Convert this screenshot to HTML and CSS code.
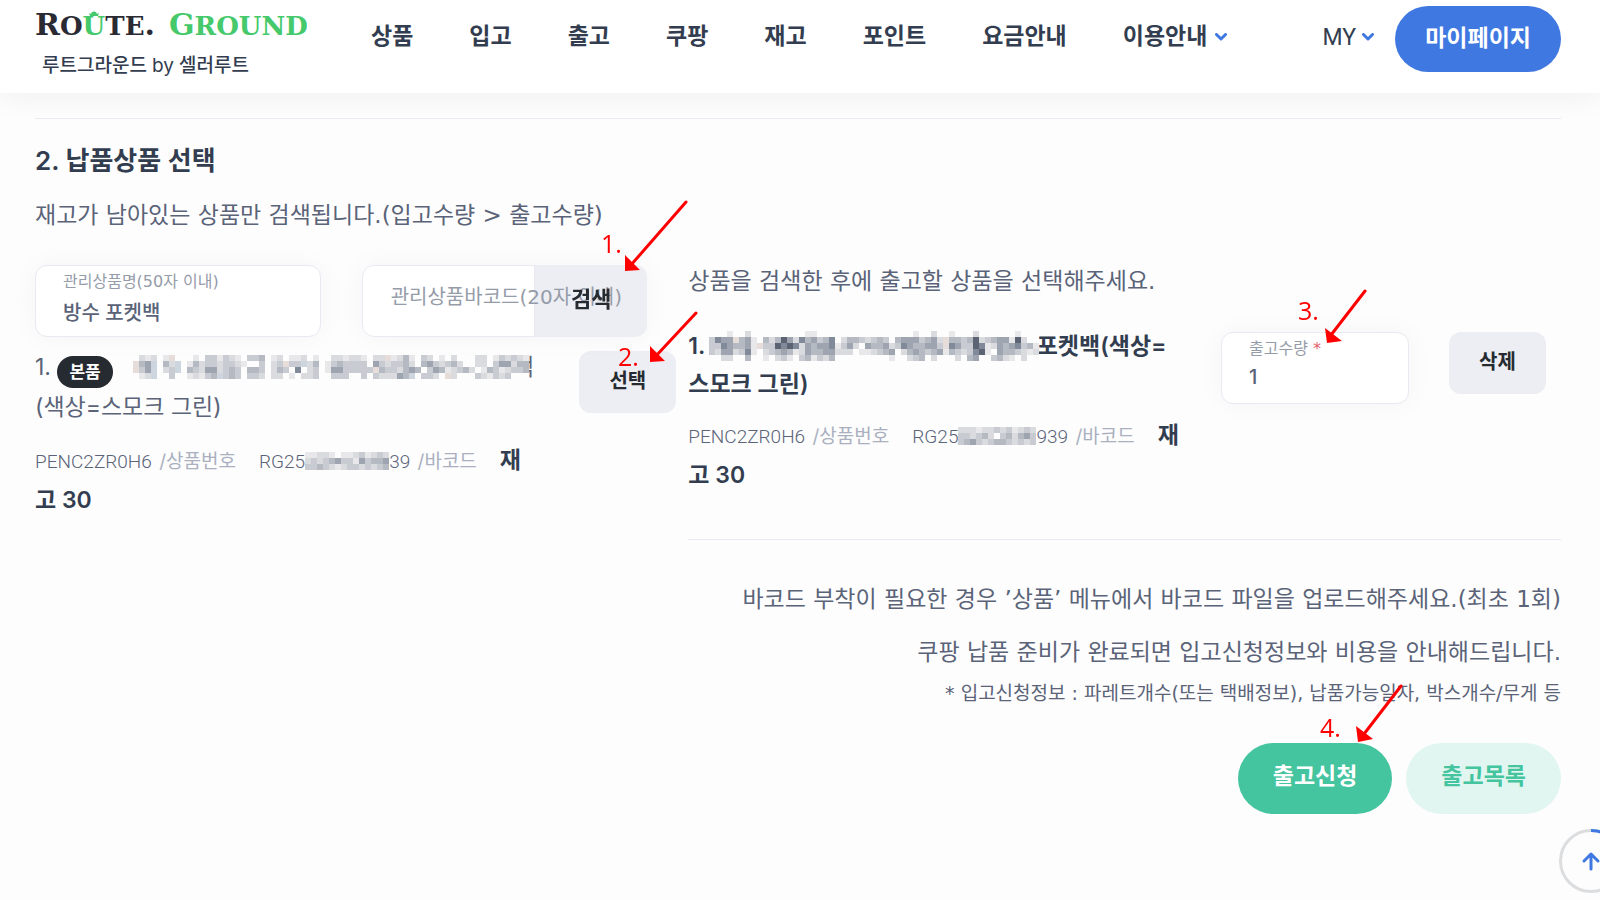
FILE: index.html
```html
<!DOCTYPE html>
<html lang="ko">
<head>
<meta charset="utf-8">
<meta name="viewport" content="width=device-width, initial-scale=1">
<title>루트그라운드</title>
<link rel="stylesheet" href="styles.css">
</head>
<body>
<header class="header">
  <a class="brand" href="#">
    <span class="logo"><span class="logo-dark"><span class="cap">R</span>O<span class="logo-u">U<svg class="crown" width="10" height="6" viewBox="0 0 10 6"><path d="M1 5 0 2l2 1 1-2h1l1-1 1 1h1l1 2 2-1-1 3z"/></svg></span>TE<span class="cap">.</span></span><span class="logo-green"><span class="cap">G</span>ROUND</span></span>
    <span class="tagline">루트그라운드 <span class="by">by</span> 셀러루트</span>
  </a>
  <nav class="nav">
    <a href="#">상품</a>
    <a href="#">입고</a>
    <a href="#">출고</a>
    <a href="#">쿠팡</a>
    <a href="#">재고</a>
    <a href="#">포인트</a>
    <a href="#">요금안내</a>
    <a href="#">이용안내<svg class="chev" width="12" height="8" viewBox="0 0 12 8"><path d="m1.500 1.500 4.500 4.500 4.500-4.500"/></svg></a>
  </nav>
  <div class="account">
    <a class="my" href="#">MY<svg class="chev" width="12" height="8" viewBox="0 0 12 8"><path d="m1.500 1.500 4.500 4.500 4.500-4.500"/></svg></a>
    <a class="mypage" href="#">마이페이지</a>
  </div>
</header>

<main class="page">
  <hr class="rule">
  <h2 class="title">2. 납품상품 선택</h2>
  <p class="lead">재고가 남아있는 상품만 검색됩니다.(입고수량 &gt; 출고수량)</p>

  <div class="columns">
    <section class="search">
      <form class="filters">
        <div class="field">
          <label for="name">관리상품명(50자 이내)</label>
          <input id="name" type="text" value="방수 포켓백">
        </div>
        <div class="group">
          <input id="barcode" type="text">
          <label for="barcode">관리상품바코드(20자 이내)</label>
          <button type="button"><span>검색</span></button>
        </div>
      </form>
      <div class="result">
        <div class="result-text">
          <p class="product">1. <span class="badge">본품</span><svg class="mosaic mosaic-soft" data-mosaic="found"></svg>백<br>(색상=스모크 그린)</p>
          <p class="meta"><span class="code">PENC2ZR0H6</span> <span class="kind">/상품번호</span><span class="code second">RG25<svg class="mosaic mosaic-code" data-mosaic="codeA"></svg>39</span> <span class="kind">/바코드</span><b class="stock">재<br>고 30</b></p>
        </div>
        <button class="btn" type="button">선택</button>
      </div>
    </section>

    <section class="chosen">
      <p class="hint">상품을 검색한 후에 출고할 상품을 선택해주세요.</p>
      <div class="item">
        <div class="item-text">
          <p class="product strong">1. <svg class="mosaic mosaic-hard" data-mosaic="picked"></svg>포켓백(색상=<br>스모크 그린)</p>
          <p class="meta"><span class="code">PENC2ZR0H6</span> <span class="kind">/상품번호</span><span class="code second">RG25<svg class="mosaic mosaic-code" data-mosaic="codeB"></svg>939</span> <span class="kind">/바코드</span><b class="stock">재<br>고 30</b></p>
        </div>
        <div class="field amount">
          <label for="qty">출고수량 <span class="req">*</span></label>
          <input id="qty" type="text" value="1">
        </div>
        <button class="btn" type="button">삭제</button>
      </div>
      <hr class="rule rule-item">
      <div class="notes">
        <p>바코드 부착이 필요한 경우 ’상품’ 메뉴에서 바코드 파일을 업로드해주세요.(최초 1회)</p>
        <p>쿠팡 납품 준비가 완료되면 입고신청정보와 비용을 안내해드립니다.</p>
        <p class="small">* 입고신청정보 : 파레트개수(또는 택배정보), 납품가능일자, 박스개수/무게 등</p>
      </div>
      <div class="actions">
        <button class="pill pill-solid" type="button">출고신청</button>
        <button class="pill pill-soft" type="button">출고목록</button>
      </div>
    </section>
  </div>
</main>

<a class="to-top" href="#" aria-label="맨 위로">
  <svg width="64" height="64" viewBox="0 0 64 64"><circle class="ring" cx="32" cy="32" r="30.500"/><path class="progress" d="M32 1.500A30.500 30.500 0 0 1 62.500 32"/><path class="arrow" d="M32 40V26M25 32l7-7 7 7"/></svg>
</a>

<svg class="marks" width="1600" height="900" viewBox="0 0 1600 900">
  <path class="shaft" d="M686 202 631 265M696 313l-41 44M1365 291l-34 44M1401 686l-37 48"/>
  <path class="head" d="M625 271V255l15 15zM650 362V346l15 15zM1327 343l-2-15 17 13zM1358 742l-2-16 17 13z"/>
  <text x="601" y="253">1.</text><text x="618" y="366">2.</text><text x="1298" y="320">3.</text><text x="1320" y="737">4.</text>
</svg>
<script src="mosaic.js"></script>
</body>
</html>
```
FILE: styles.css
```css
* { box-sizing: border-box; }
body {
  margin: 0;
  min-height: 100vh;
  overflow: hidden;
  position: relative;
  background: #fdfdfd;
  color: #5a6378;
  font-family: Inter, "Noto Sans CJK KR", sans-serif;
  font-size: 23px;
  line-height: 38px;
}
p, h2 { margin: 0; }
a { color: inherit; text-decoration: none; }
button, input { font: inherit; border: 0; margin: 0; }
button { cursor: pointer; }

.header {
  position: relative;
  display: flex;
  align-items: flex-start;
  height: 93px;
  padding: 6px 39px 0 35px;
  background: #fff;
  color: #333d50;
  box-shadow: 0 6px 26px rgba(0, 0, 0, .05);
}
.brand { display: block; width: 336px; }
.logo {
  display: flex;
  gap: 14px;
  font: bold 26px/38px "DejaVu Serif", serif;
}
.logo .cap { font-size: 30px; }
.logo-dark { color: #2a2a33; }
.logo-green, .logo-u { color: #45c96b; }
.logo-u { position: relative; }
.crown { position: absolute; left: 6px; top: 0; fill: #45c96b; }
.tagline { display: block; padding-left: 7px; font-size: 19px; line-height: 42px; font-weight: 500; }
.by { font-weight: 400; }
.nav { display: flex; gap: 56px; flex: 1; font-weight: 600; line-height: 60px; }
.chev { margin-left: 8px; vertical-align: 3px; fill: none; stroke: #3f78e0; stroke-width: 3; stroke-linecap: round; stroke-linejoin: round; }
.account { display: flex; gap: 21px; }
.my { font-family: Roboto, sans-serif; line-height: 64px; }
.my .chev { margin-left: 6px; vertical-align: 4px; }
.mypage {
  height: 66px;
  padding: 0 30px;
  border-radius: 33px;
  background: #3f78e0;
  color: #fff;
  font-weight: 700;
  line-height: 64px;
}

.page { padding: 25px 39px 40px 35px; }
.rule { margin: 0; border: 0; border-top: 1px solid #e9eaf2; }
.title { margin-top: 23px; color: #333d50; font-size: 26px; font-weight: 600; }
.lead { margin-top: 16px; }
.lead, .hint, .notes, .field label, .group label {
  font-family: "DejaVu Sans", "Noto Sans CJK KR", sans-serif;
}
.columns { display: flex; gap: 41px; margin-top: 31px; }
.search { flex: 0 0 40.125%; }
.chosen { flex: 1; }
.filters { display: grid; grid-template-columns: 1fr 1fr; gap: 41px; }
.field, .group {
  min-width: 0;
  height: 72px;
  border-radius: 12px;
  background: #fff;
  box-shadow: 0 0 28px rgba(30, 34, 40, .04);
}
.field {
  display: flex;
  flex-direction: column;
  padding: 5px 27px 0;
  border: 1px solid #e8e9f2;
}
.field label { color: #959ca9; font-size: 16px; line-height: 22px; }
.field input, .group input {
  width: 100%;
  padding: 0;
  background: transparent;
  color: #5a6378;
  font-size: 20px;
  font-weight: 500;
  line-height: 40px;
}
.group { display: flex; position: relative; }
.group input { flex: 1; min-width: 0; border: 1px solid #e8e9f2; border-radius: 12px 0 0 12px; }
.group label {
  position: absolute;
  left: 29px;
  top: 13px;
  color: #959ca9;
  font-size: 20px;
  white-space: nowrap;
}
.group button {
  width: 112px;
  padding: 0 0 4px;
  border-radius: 0 12px 12px 0;
  background: #edeef3;
  color: #262b32;
  font-size: 22px;
  font-weight: 700;
}
.group button span { position: relative; z-index: 2; }
.result { display: flex; justify-content: space-between; align-items: flex-start; margin: 11px -29px 0 0; }
.result-text { white-space: nowrap; }
.result .btn { margin-top: 3px; }
.badge {
  display: inline-block;
  margin: 0 20px 0 0;
  padding: 0 12px;
  border-radius: 16px;
  background: #262b32;
  color: #fff;
  font-size: 17px;
  font-weight: 700;
  line-height: 32px;
  vertical-align: -3px;
}
.mosaic { position: relative; background: #fdfdfd; vertical-align: -4px; }
.mosaic-soft { margin-right: -16px; }
.mosaic-hard { margin: 0 -2px 0 -2px; vertical-align: -7px; }
.mosaic-code { vertical-align: -2px; }
.strong { color: #333d50; font-weight: 600; white-space: nowrap; }
.meta { margin-top: 15px; font-size: 19px; white-space: nowrap; }
.item .meta { margin-top: 13px; }
.code { font-family: Roboto, sans-serif; font-weight: 300; }
.second { margin-left: 23px; }
.kind { margin-left: 2px; color: #aab0c0; }
.stock { margin-left: 23px; color: #333d50; font-size: 23px; font-weight: 600; }
.btn {
  width: 97px;
  height: 62px;
  padding: 0 0 3px;
  border-radius: 12px;
  background: #edeef3;
  color: #262b32;
  font-size: 20px;
  font-weight: 700;
}
.hint { margin-top: -3px; }
.item { display: flex; align-items: flex-start; padding-right: 15px; margin-top: 27px; }
.item-text { flex: 1; }
.amount { flex: 0 0 188px; margin: 5px 40px 0 0; }
.amount input { line-height: 34px; }
.item .btn { margin-top: 5px; }
.req { color: #e2626b; }
.rule-item { margin-top: 43px; }
.notes { margin-top: 40px; text-align: right; }
.notes p + p { margin-top: 15px; }
.notes p.small { margin-top: 3px; font-size: 19px; }
.actions { display: flex; justify-content: flex-end; gap: 14px; margin-top: 31px; }
.pill { height: 71px; padding: 0 35px 5px; border-radius: 36px; font-weight: 700; }
.pill-solid { background: #45c4a0; color: #fff; }
.pill-soft { background: #e1f6f0; color: #45c4a0; }

.to-top { position: fixed; right: -23px; bottom: 7px; height: 64px; }
.to-top svg { display: block; fill: none; }
.ring { stroke: #dcdddf; stroke-width: 3; }
.progress { stroke: #3f78e0; stroke-width: 3; }
.arrow { stroke: #3f78e0; stroke-width: 3; stroke-linecap: round; stroke-linejoin: round; }

.marks { position: absolute; left: 0; top: 0; pointer-events: none; }
.shaft { stroke: #f00; stroke-width: 3; stroke-linecap: round; }
.head { fill: #f00; }
.marks text { fill: #f00; font-family: "Open Sans", sans-serif; font-size: 25px; font-weight: 400; }
```
FILE: mosaic.js
```js
// Each letter is one shade of a censored block; a dot is an empty cell.
const shades = {
  a: '#e8e8ea', b: '#d9dbdf', c: '#c8cbd2', d: '#b5b9c2', e: '#9ea4b0',
  f: '#808a99', g: '#5c6474', p: '#e6dcda', t: '#cdd6de'
};
const grids = {
  found: { cell: 6, rows: [
    '.bab.ap...a.ccacba.ccd.ab.aab.a..bbabba.bbpabda.cb.a.b...bb.acbcba',
    'pdet.dbt.adbccbccba..c.bcpcctbd.acdcccc.ecbccdb.decbcdb..bb.ceebdd',
    'pcet.bct.dcbeebcdc.ddc.bdc.f.bc.aeecccccpdccbded.cedabcdb.adcabccdd',
    '.abt..c..abacdtcdc.ccb.bb.a.bbc..ccc..c.cbbbedt.ccb.pb...cbacbc...'
  ] },
  picked: { cell: 6, rows: [
    '...a..b.........aa................a..b..a...b......a...',
    'cfeepdea.dbdgebfdecdf.bddcbcdc.deeecdebpddcdgbcdeeagb..',
    'ccfeddeapccgfgfbedeefaceb.eddebcfeddeecpfeccgfabedefcda',
    'cbeebcfa.bcdedabeddeebbb.aabcde.bdedcdeadcbcfga.eddcbab',
    '..bb..d..a.bca.cdacbd.........a..bcd.b...b.de..cdba.b..'
  ] },
  codeA: { cell: 6, rows: ['aabba.aabcabcb', 'bcbcdeccaecdde', 'ccdcbabccbcbcd'] },
  codeB: { cell: 6, rows: ['bbbabbcbcabcb', 'ccbcdb.cdbdec', 'cdecbcddcbcbc'] }
};
const NS = 'http://www.w3.org/2000/svg';
document.querySelectorAll('[data-mosaic]').forEach(svg => {
  const { cell, rows } = grids[svg.dataset.mosaic];
  svg.setAttribute('width', rows[0].length * cell);
  svg.setAttribute('height', rows.length * cell);
  rows.forEach((row, y) => [...row].forEach((key, x) => {
    if (!shades[key]) return;
    const rect = document.createElementNS(NS, 'rect');
    rect.setAttribute('x', x * cell);
    rect.setAttribute('y', y * cell);
    rect.setAttribute('width', cell);
    rect.setAttribute('height', cell);
    rect.setAttribute('fill', shades[key]);
    svg.append(rect);
  }));
});
```
